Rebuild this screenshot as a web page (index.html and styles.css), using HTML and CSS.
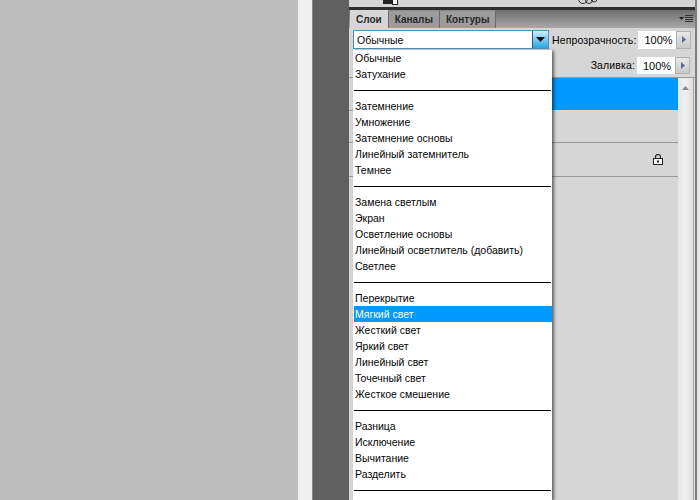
FILE: index.html
```html
<!DOCTYPE html>
<html lang="ru">
<head>
<meta charset="utf-8">
<title>Слои</title>
<link rel="stylesheet" href="styles.css">
</head>
<body>
<div class="desk">
  <div class="canvas"></div>
  <div class="edge"></div>
  <div class="gutter"></div>
  <div class="panel">
    <div class="strip">
      <svg class="strip-a" width="15" height="7" viewBox="0 0 15 7"><rect x="0" y="0" width="10" height="4" fill="#222"/><rect x="9.500" y="-1" width="5" height="5.500" fill="#fff" stroke="#222"/></svg>
      <svg class="strip-b" width="22" height="7" viewBox="0 0 22 7"><g fill="none" stroke="#333"><circle cx="6" cy="-1" r="4.500"/><circle cx="12" cy="0" r="3.500"/><circle cx="17" cy="-1" r="3"/></g></svg>
    </div>
    <div class="divider"></div>
    <div class="tabbar">
      <span class="tab tab-on">Слои</span>
      <span class="tab">Каналы</span>
      <span class="tab">Контуры</span>
      <svg class="panel-menu" width="14" height="8" viewBox="0 0 14 8"><path d="M0 2h5L2.500 5z" fill="#222"/><path d="M6 .5h8M6 2.500h8M6 4.500h8M6 6.500h8" stroke="#333"/></svg>
    </div>
    <div class="opts opts-one">
      <div class="select"><span class="select-value">Обычные</span>
        <span class="select-btn"><svg width="9" height="5" viewBox="0 0 9 5"><path d="M0 0h9L4.500 5z" fill="#111"/></svg></span>
      </div>
      <span class="opt-label">Непрозрачность:</span>
      <span class="opt-value">100%</span>
      <span class="opt-arrow"><svg width="4" height="7" viewBox="0 0 4 7"><path d="M0 0l4 3.500L0 7z" fill="#5a6a9a"/></svg></span>
    </div>
    <div class="opts opts-two">
      <span class="opt-label">Заливка:</span>
      <span class="opt-value">100%</span>
      <span class="opt-arrow"><svg width="4" height="7" viewBox="0 0 4 7"><path d="M0 0l4 3.500L0 7z" fill="#5a6a9a"/></svg></span>
    </div>
    <div class="layers">
      <div class="layer-list">
        <div class="layer layer-on"></div>
        <div class="layer"></div>
        <div class="layer layer-locked">
          <svg width="10" height="11" viewBox="0 0 10 11"><path d="M2.500 5V3a2.500 2.500 0 0 1 5 0v2" fill="none" stroke="#222" stroke-width="1.200"/><rect x=".5" y="4.500" width="9" height="6" fill="#f4f4f4" stroke="#222"/><rect x="4" y="6.500" width="2" height="2" fill="#222"/></svg>
        </div>
      </div>
      <div class="scroll"><svg width="7" height="4" viewBox="0 0 7 4"><path d="M0 4l3.500-4L7 4z" fill="#8a8a8a"/></svg></div>
    </div>
  </div>
  <div class="rail"></div>
</div>
<ul class="menu">
  <li>Обычные</li>
  <li>Затухание</li>
  <li class="sep"></li>
  <li>Затемнение</li>
  <li>Умножение</li>
  <li>Затемнение основы</li>
  <li>Линейный затемнитель</li>
  <li>Темнее</li>
  <li class="sep"></li>
  <li>Замена светлым</li>
  <li>Экран</li>
  <li>Осветление основы</li>
  <li>Линейный осветлитель (добавить)</li>
  <li>Светлее</li>
  <li class="sep"></li>
  <li>Перекрытие</li>
  <li class="hot">Мягкий свет</li>
  <li>Жесткий свет</li>
  <li>Яркий свет</li>
  <li>Линейный свет</li>
  <li>Точечный свет</li>
  <li>Жесткое смешение</li>
  <li class="sep"></li>
  <li>Разница</li>
  <li>Исключение</li>
  <li>Вычитание</li>
  <li>Разделить</li>
  <li class="sep"></li>
</ul>
</body>
</html>
```
FILE: styles.css
```css
* { box-sizing: border-box; }
html, body { margin: 0; height: 500px; overflow: hidden; }
body { position: relative; font-family: "Liberation Sans", Arial, sans-serif; font-size: 10.5px; color: #050505; }
.desk { display: flex; height: 500px; }
.canvas { width: 298px; background: #bdbdbd; }
.edge { width: 15px; background: #efefef; border-right: 1px solid #8a8a8a; }
.gutter { width: 36px; background: #606060; }
.panel { width: 346px; background: #d6d6d6; display: flex; flex-direction: column; }
.strip { height: 7px; display: flex; overflow: hidden; background: #d4d4d4; padding-left: 34px; }
.strip-a { flex: none; }
.strip-b { flex: none; margin-left: 179px; }
.divider { height: 3px; background: #2e2e2e; }
.tabbar { height: 18px; display: flex; align-items: stretch; background: linear-gradient(#6e6e6e, #a8a8a8); padding-left: 1px; position: relative; }
.tab { padding: 0 6px; line-height: 18px; font-weight: 700; font-size: 10px; color: #2a2a2a; background: #9c9c9c; border-right: 1px solid #6a6a6a; border-top: 1px solid #8a8a8a; }
.tab-on { background: #d6d6d6; border-top-color: #d6d6d6; }
.panel-menu { position: absolute; right: 2px; top: 5px; }
.opts { display: flex; align-items: center; justify-content: flex-end; padding-right: 5px; }
.opts-one { height: 24px; padding-top: 1px; padding-bottom: 2px; justify-content: flex-start; padding-left: 4px; }
.opts-two { height: 26px; padding-top: 1px; border-bottom: 1px solid #9a9a9a; }
.select { width: 196px; height: 19px; flex: none; display: flex; background: #fff; border: 1px solid #4f93b8; margin-right: 3px; }
.select-value { flex: 1; padding-left: 3px; line-height: 18px; }
.select-btn { width: 16px; display: flex; align-items: center; justify-content: center; background: linear-gradient(#cfeefb, #28a6df); border-left: 1px solid #2a5f80; }
.opt-label { margin-right: 2px; white-space: nowrap; letter-spacing: .13px; }
.opt-value { width: 38px; height: 18px; flex: none; background: #fff; line-height: 18px; padding-left: 6px; font-size: 11px; }
.opts-two .opt-value, .opts-two .opt-arrow { height: 17px; }
.opt-arrow { width: 15px; height: 18px; flex: none; display: flex; align-items: center; justify-content: center; background: linear-gradient(#e8e8e8, #c8c8c8); border: 1px solid #b0b0b0; }
.layers { flex: 1; display: flex; }
.layer-list { width: 329px; background: linear-gradient(#9a9a9a, #9a9a9a) 0 32px / 4px 1px no-repeat; }
.layer { height: 33px; border-bottom: 1px solid #9a9a9a; }
.layer-on { height: 32px; margin-left: 4px; background: #0099ff; border-bottom: 0; }
.layer-locked { height: 34px; display: flex; align-items: center; justify-content: flex-end; padding-right: 15px; }
.scroll { width: 16px; background: linear-gradient(90deg, #e6e6e6, #f0f0f0 50%, #dcdcdc); border-right: 1px solid #aaa; display: flex; justify-content: center; padding-top: 8px; }
.scroll svg { flex: none; }
.rail { flex: 1; background: #e4e4e4; border-left: 2px solid #7e7e7e; }
.menu { position: absolute; left: 353px; top: 50px; width: 199px; height: 450px; margin: 0; padding: 0 0 0 1px; list-style: none; background: #fff; box-shadow: 2px 1px 3px rgba(0,0,0,.55); overflow: hidden; }
.menu li { height: 16px; line-height: 17px; padding-left: 1px; white-space: nowrap; }
.menu .hot { background: #0099ff; color: #fff; }
.menu .sep { position: relative; }
.menu .sep::after { content: ""; position: absolute; left: 0; right: 1px; top: 8px; height: 1px; background: #000; }
```
